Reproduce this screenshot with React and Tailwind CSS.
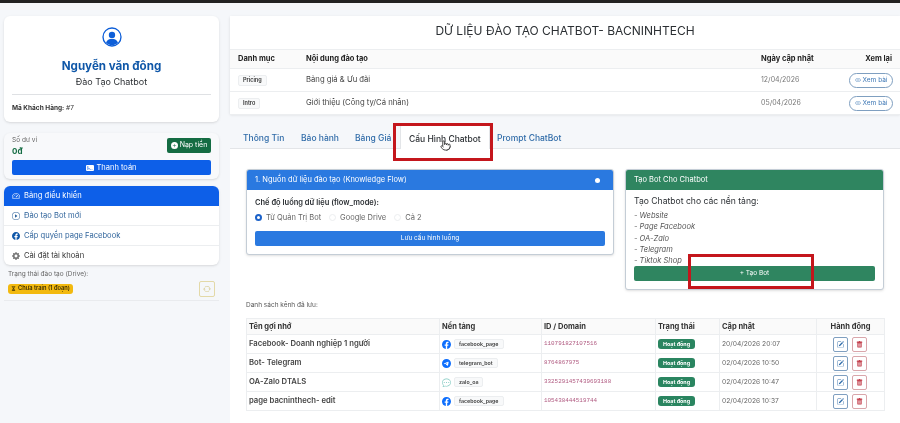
import { Pointer } from "lucide-react";
import {
  BsArrowRepeat,
  BsChatDots,
  BsCreditCard2FrontFill,
  BsEye,
  BsFacebook,
  BsGearFill,
  BsHourglassSplit,
  BsPencilSquare,
  BsPlayCircle,
  BsPlusCircleFill,
  BsSpeedometer2,
  BsTelegram,
  BsTrashFill,
} from "react-icons/bs";

const docs = [
  { tag: "Pricing", title: "Bảng giá & Ưu đãi", date: "12/04/2026" },
  { tag: "Intro", title: "Giới thiệu (Công ty/Cá nhân)", date: "05/04/2026" },
];

const channels = [
  { name: "Facebook- Doanh nghiệp 1 người", type: "facebook_page", id: "110791827107516", updated: "20/04/2026 20:07" },
  { name: "Bot- Telegram", type: "telegram_bot", id: "8764867975", updated: "02/04/2026 10:50" },
  { name: "OA-Zalo DTALS", type: "zalo_oa", id: "3325291457439693188", updated: "02/04/2026 10:47" },
  { name: "page bacninthech- edit", type: "facebook_page", id: "105438444519744", updated: "02/04/2026 10:37" },
];

function PlatformIcon({ type }) {
  if (type === "facebook_page") return <BsFacebook className="w-[9px] h-[9px] text-[#0d6efd] shrink-0" />;
  if (type === "telegram_bot") return <BsTelegram className="w-[9px] h-[9px] text-[#0d6efd] shrink-0" />;
  return <BsChatDots className="w-[9px] h-[9px] text-[#7cc7bf] shrink-0" />;
}

function Sidebar() {
  return (
    <aside className="w-[215px] ml-1 shrink-0 flex flex-col">
      <div className="h-[106px] bg-white rounded-md shadow-sm px-2 pt-[11px] flex flex-col">
        <svg viewBox="0 0 24 24" className="w-5 h-5 mx-auto" fill="none">
          <circle cx="12" cy="12" r="10.8" stroke="#0d5ed8" strokeWidth="1.6" />
          <circle cx="12" cy="9.5" r="3.8" fill="#0d5ed8" />
          <path d="M4.8 19c1-3.4 3.8-4.8 7.2-4.8s6.2 1.4 7.2 4.8c-2 1.9-4.5 3-7.2 3s-5.2-1.1-7.2-3z" fill="#0d5ed8" />
        </svg>
        <div className="mt-[11px] text-center text-[11.6px] leading-[16px] font-bold text-[#0f57a8]">Nguyễn văn đông</div>
        <div className="mt-[1px] text-center text-[9px] leading-[14px] text-[#2b2f33]">Đào Tạo Chatbot</div>
        <div className="mt-[5px] border-t border-[#dfe1e4]" />
        <div className="mt-[8px] text-[6.5px] leading-[10px] text-[#333]">
          <span className="font-bold">Mã Khách Hàng:</span> #7
        </div>
      </div>

      <div className="mt-[11px] h-[46px] bg-[#f8f9fb] rounded-md shadow-sm px-2 pt-[4px]">
        <div className="flex items-center justify-between h-[18px]">
          <div className="mt-[1px]">
            <div className="text-[6.5px] leading-[9px] text-[#666]">Số dư ví</div>
            <div className="text-[8px] leading-[12px] font-bold text-[#146c43]">0đ</div>
          </div>
          <div className="-mt-[1px] w-[44px] h-[15px] rounded-[2px] bg-[#146c43] text-white text-[7px] flex items-center justify-center gap-[2px]">
            <BsPlusCircleFill className="w-[7px] h-[7px]" />
            Nạp tiền
          </div>
        </div>
        <div className="mt-[5px] h-[15px] rounded-[2px] bg-[#0d5fe8] text-white text-[7.5px] flex items-center justify-center gap-[2px]">
          <BsCreditCard2FrontFill className="w-2 h-2" />
          Thanh toán
        </div>
      </div>

      <nav className="mt-[7px] bg-white rounded-md shadow-sm overflow-hidden text-[7.6px]">
        <div className="h-[20px] bg-[#0d5fe8] text-white flex items-center gap-[4px] px-2">
          <BsSpeedometer2 className="w-2 h-2" />
          Bảng điều khiển
        </div>
        <div className="h-[20px] border-b border-[#eceef0] text-[#31659c] flex items-center gap-[4px] px-2">
          <BsPlayCircle className="w-2 h-2" />
          Đào tạo Bot mới
        </div>
        <div className="h-[20px] border-b border-[#eceef0] text-[#31659c] flex items-center gap-[4px] px-2">
          <BsFacebook className="w-2 h-2 text-[#0f57a8]" />
          Cấp quyền page Facebook
        </div>
        <div className="h-[19px] text-[#333] flex items-center gap-[4px] px-2">
          <BsGearFill className="w-2 h-2 text-[#777]" />
          Cài đặt tài khoản
        </div>
      </nav>

      <div className="mt-[4px] px-1 pb-[2px] border-b border-[#e9ebee]">
        <div className="text-[6.5px] leading-[10px] text-[#666]">Trạng thái đào tạo (Drive):</div>
        <div className="flex items-center justify-between h-[19px]">
          <span className="h-[10px] px-[3px] rounded-[3px] bg-[#f2b90f] text-[#3a2c00] text-[5.7px] font-semibold flex items-center gap-[2px] whitespace-nowrap">
            <BsHourglassSplit className="w-[5px] h-[5px]" />
            Chưa train (1 đoạn)
          </span>
          <span className="w-4 h-4 rounded-[2px] border border-[#e3d9a8] flex items-center justify-center">
            <BsArrowRepeat className="w-2 h-2 text-[#d6c98c]" />
          </span>
        </div>
      </div>
    </aside>
  );
}

function DocsCard() {
  return (
    <div className="h-[98px] bg-white shadow-sm">
      <h1 className="h-[33px] text-center text-[12px] leading-[29px] text-[#2b2f33]">DỮ LIỆU ĐÀO TẠO CHATBOT- BACNINHTECH</h1>
      <table className="w-full table-fixed text-[7.7px] text-[#444]">
        <thead>
          <tr className="h-[19px] bg-[#fafafa] border-y border-[#eceef0] text-[#222] font-bold text-[7.5px]">
            <th className="w-[76px] pl-2 text-left">Danh mục</th>
            <th className="text-left">Nội dung đào tạo</th>
            <th className="w-[79px] text-left">Ngày cập nhật</th>
            <th className="w-[60px] pr-[8px] text-right">Xem lại</th>
          </tr>
        </thead>
        <tbody>
          {docs.map((d) => (
            <tr key={d.tag} className="h-[23px] border-b border-[#eceef0]">
              <td className="pl-2">
                <span className="inline-block px-[4px] text-[5.5px] leading-[9px] font-semibold rounded-[2px] bg-[#f8f9fa] border border-[#eceef0] text-[#333]">{d.tag}</span>
              </td>
              <td>{d.title}</td>
              <td className="text-[#777] text-[7px]">{d.date}</td>
              <td className="pr-[7px]">
                <div className="ml-auto w-[44px] h-[15px] rounded-full border border-[#7f9fc0] text-[#3f78b5] text-[6.5px] leading-none flex items-center justify-center gap-[2px] whitespace-nowrap">
                  <BsEye className="w-[6px] h-[6px] shrink-0" />
                  <span>Xem bài</span>
                </div>
              </td>
            </tr>
          ))}
        </tbody>
      </table>
    </div>
  );
}

function Tabs() {
  return (
    <div className="mt-[11px] h-[24px] flex items-end pl-[13px] border-b border-[#e3e5e8] text-[8.5px] font-medium text-[#2f6ba8] relative">
      <span className="h-[24px] leading-[28px] w-[58px]">Thông Tin</span>
      <span className="h-[24px] leading-[28px] w-[54px]">Bảo hành</span>
      <span className="h-[24px] leading-[28px] w-[45px]">Bảng Giá</span>
      <span className="h-[25px] -mb-px leading-[28px] w-[90px] pl-[8px] bg-white border border-b-0 border-[#e3e5e8] rounded-t-[3px] text-[#2b2f33]">Cấu Hình Chatbot</span>
      <span className="h-[24px] leading-[28px] ml-[7px]">Prompt ChatBot</span>
    </div>
  );
}

function FlowCard() {
  return (
    <div className="w-[368px] h-[86px] rounded-[3px] border border-[#c4cdd6] bg-white shadow-sm overflow-hidden">
      <div className="h-[20px] bg-[#2a79e0] text-white text-[7.5px] flex items-center justify-between px-2">
        1. Nguồn dữ liệu đào tạo (Knowledge Flow)
        <span className="w-[5px] h-[5px] mr-[5px] rounded-full bg-white" />
      </div>
      <div className="px-2 pt-[7px]">
        <div className="text-[7.5px] leading-[11px] font-semibold text-[#2b2f33]">Chế độ luồng dữ liệu (flow_mode):</div>
        <div className="mt-[4px] flex items-center text-[7.5px] leading-[11px] text-[#666]">
          <span className="w-[7px] h-[7px] rounded-full border-2 border-[#1c62c9] bg-white" />
          <span className="ml-[4px]">Từ Quản Trị Bot</span>
          <span className="ml-[8px] w-[7px] h-[7px] rounded-full border border-[#eceef0]" />
          <span className="ml-[4px]">Google Drive</span>
          <span className="ml-[8px] w-[7px] h-[7px] rounded-full border border-[#eceef0]" />
          <span className="ml-[4px]">Cả 2</span>
        </div>
        <div className="mt-[8px] h-[15px] rounded-[2px] bg-[#2a79e0] text-white text-[6.5px] flex items-center justify-center">
          Lưu cấu hình luồng
        </div>
      </div>
    </div>
  );
}

function BotCard() {
  return (
    <div className="w-[259px] h-[121px] rounded-[3px] border border-[#c4cdd6] bg-white shadow-sm overflow-hidden">
      <div className="h-[20px] bg-[#2f8560] text-white text-[7.5px] flex items-center px-2">Tạo Bot Cho Chatbot</div>
      <div className="px-2 pt-[4px]">
        <div className="text-[8.6px] leading-[14px] text-[#2b2f33]">Tạo Chatbot cho các nền tảng:</div>
        <ul className="mt-[2px] text-[7.5px] leading-[11.3px] italic text-[#555]">
          <li>- Website</li>
          <li>- Page Facebook</li>
          <li>- OA-Zalo</li>
          <li>- Telegram</li>
          <li>- Tiktok Shop</li>
        </ul>
        <div className="h-[15px] rounded-[2px] bg-[#2f8560] text-white text-[6.5px] flex items-center justify-center">+ Tạo Bot</div>
      </div>
    </div>
  );
}

function ChannelsTable() {
  const cell = "border border-[#eceef0] px-[2px] py-0";
  return (
    <div className="mt-[10px]">
      <div className="text-[6.5px] leading-[10px] text-[#555]">Danh sách kênh đã lưu:</div>
      <table className="mt-[8px] w-[639px] table-fixed border-collapse text-[7.7px] text-[#444]">
        <thead>
          <tr className="h-[16px] bg-[#fafafa] text-[#333] font-semibold text-left text-[7.5px]">
            <th className={`${cell} w-[193px]`}>Tên gợi nhớ</th>
            <th className={`${cell} w-[102px]`}>Nền tảng</th>
            <th className={`${cell} w-[114px]`}>ID / Domain</th>
            <th className={`${cell} w-[64px]`}>Trạng thái</th>
            <th className={`${cell} w-[97px]`}>Cập nhật</th>
            <th className={`${cell} text-center`}>Hành động</th>
          </tr>
        </thead>
        <tbody>
          {channels.map((c) => (
            <tr key={c.name} className="h-[19px]">
              <td className={`${cell} font-semibold`}>{c.name}</td>
              <td className={cell}>
                <div className="flex items-center gap-[3px]">
                  <PlatformIcon type={c.type} />
                  <span className="h-[10px] px-[4px] bg-[#f8f9fa] border border-[#eceef0] rounded-[2px] text-[5.3px] leading-[8px] font-semibold text-[#444]">{c.type}</span>
                </div>
              </td>
              <td className={`${cell} font-['Liberation_Mono',monospace] text-[5.9px] text-[#b05a80]`}>{c.id}</td>
              <td className={cell}>
                <span className="block w-[37px] h-[10px] rounded-[3px] bg-[#2a8560] text-white text-[5.4px] leading-[10px] font-bold text-center whitespace-nowrap">Hoạt động</span>
              </td>
              <td className={`${cell} text-[#666] text-[6.7px]`}>{c.updated}</td>
              <td className={cell}>
                <div className="flex justify-center gap-[4px] pr-[2px]">
                  <span className="w-[15px] h-[15px] rounded-[2px] border border-[#7f9fc0] flex items-center justify-center">
                    <BsPencilSquare className="w-[7px] h-[7px] text-[#2f6ba8]" />
                  </span>
                  <span className="w-[15px] h-[15px] rounded-[2px] border border-[#d9a6ab] flex items-center justify-center">
                    <BsTrashFill className="w-[7px] h-[7px] text-[#c4424f]" />
                  </span>
                </div>
              </td>
            </tr>
          ))}
        </tbody>
      </table>
    </div>
  );
}

export default function App() {
  return (
    <div className="relative w-[900px] h-[423px] overflow-hidden bg-[#f5f7fa] font-['Inter','Liberation_Sans',sans-serif] blur-[0.35px]">
      <div className="h-[3px] bg-[#222]" />
      <div className="flex gap-[11px] pt-[13px]">
        <Sidebar />
        <main className="flex-1 min-w-0">
          <DocsCard />
          <Tabs />
          <div className="bg-white px-4 pt-5 h-[280px]">
            <div className="flex gap-[11px]">
              <FlowCard />
              <BotCard />
            </div>
            <ChannelsTable />
          </div>
        </main>
      </div>

      {/* red annotation boxes drawn over the page */}
      <div className="absolute left-[393px] top-[123px] w-[100px] h-[38px] border-[3px] border-[#c4161c]" />
      <div className="absolute left-[688px] top-[254px] w-[126px] h-[35px] border-[3px] border-[#c4161c]" />
      <Pointer className="absolute left-[440px] top-[140px] w-[11px] h-[11px] text-[#333] fill-white" />
    </div>
  );
}
